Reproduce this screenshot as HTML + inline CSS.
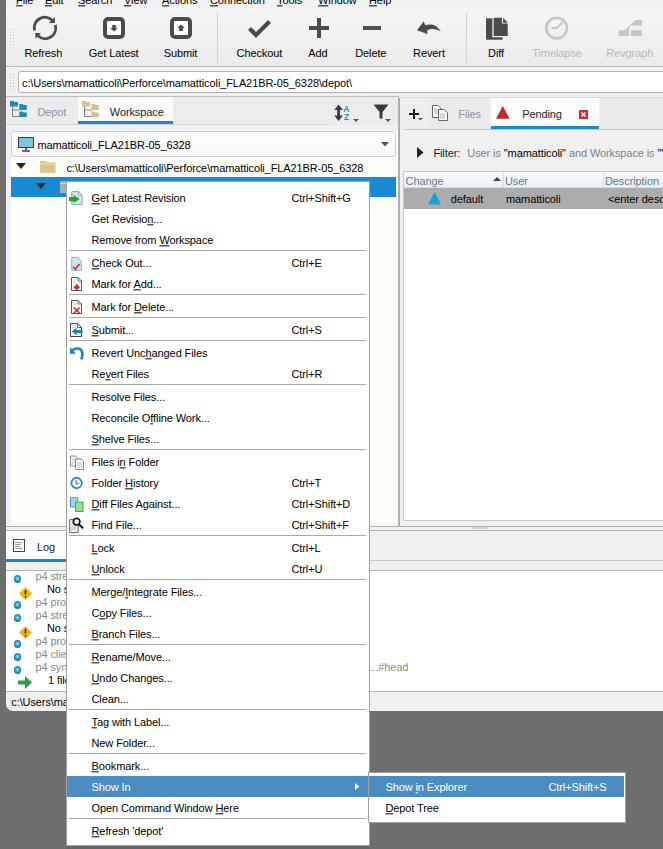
<!DOCTYPE html><html><head><meta charset="utf-8"><style>
*{margin:0;padding:0;box-sizing:border-box}
html,body{width:663px;height:849px;overflow:hidden;background:#6e6e6e;font-family:"Liberation Sans",sans-serif;font-size:11px;color:#000}
.a{position:absolute}
.t{position:absolute;white-space:nowrap;height:0;line-height:0;letter-spacing:-0.1px}
.bl{position:absolute;left:0;bottom:0;line-height:normal;display:block;transform:translateY(0.212em)}
u{text-decoration:underline;text-underline-offset:1px;text-decoration-thickness:1px}
svg{position:absolute;overflow:visible}
</style></head><body>
<div class="a" style="left:6px;top:0;width:657px;height:711px;background:#f0f0f0;border-bottom-left-radius:7px"></div>
<div class="a" style="left:6px;top:0;width:657px;height:8px;background:#f2f2f2"></div>
<div class="t" style="left:16px;top:3.6px;color:#000;font-size:11px;"><span class="bl"><u>F</u>ile</span></div>
<div class="t" style="left:45px;top:3.6px;color:#000;font-size:11px;"><span class="bl"><u>E</u>dit</span></div>
<div class="t" style="left:78px;top:3.6px;color:#000;font-size:11px;"><span class="bl"><u>S</u>earch</span></div>
<div class="t" style="left:124px;top:3.6px;color:#000;font-size:11px;"><span class="bl"><u>V</u>iew</span></div>
<div class="t" style="left:162px;top:3.6px;color:#000;font-size:11px;"><span class="bl"><u>A</u>ctions</span></div>
<div class="t" style="left:210px;top:3.6px;color:#000;font-size:11px;"><span class="bl"><u>C</u>onnection</span></div>
<div class="t" style="left:277px;top:3.6px;color:#000;font-size:11px;"><span class="bl"><u>T</u>ools</span></div>
<div class="t" style="left:318px;top:3.6px;color:#000;font-size:11px;"><span class="bl"><u>W</u>indow</span></div>
<div class="t" style="left:369px;top:3.6px;color:#000;font-size:11px;"><span class="bl"><u>H</u>elp</span></div>
<div class="a" style="left:6px;top:8px;width:657px;height:58px;background:linear-gradient(#f6f6f6,#ebebeb)"></div>
<div class="a" style="left:6px;top:66px;width:657px;height:1px;background:#b9b9b9"></div>
<div class="a" style="left:10px;top:29px;width:1px;height:1px;background:#bdbdbd"></div>
<div class="a" style="left:13px;top:29px;width:1px;height:1px;background:#bdbdbd"></div>
<div class="a" style="left:10px;top:32px;width:1px;height:1px;background:#bdbdbd"></div>
<div class="a" style="left:13px;top:32px;width:1px;height:1px;background:#bdbdbd"></div>
<div class="a" style="left:10px;top:35px;width:1px;height:1px;background:#bdbdbd"></div>
<div class="a" style="left:13px;top:35px;width:1px;height:1px;background:#bdbdbd"></div>
<div class="a" style="left:10px;top:38px;width:1px;height:1px;background:#bdbdbd"></div>
<div class="a" style="left:13px;top:38px;width:1px;height:1px;background:#bdbdbd"></div>
<div class="a" style="left:10px;top:41px;width:1px;height:1px;background:#bdbdbd"></div>
<div class="a" style="left:13px;top:41px;width:1px;height:1px;background:#bdbdbd"></div>
<div class="a" style="left:10px;top:44px;width:1px;height:1px;background:#bdbdbd"></div>
<div class="a" style="left:13px;top:44px;width:1px;height:1px;background:#bdbdbd"></div>
<div class="a" style="left:217px;top:12px;width:1px;height:52px;background:#d2d2d2"></div>
<div class="a" style="left:466px;top:12px;width:1px;height:52px;background:#d2d2d2"></div>
<div class="t" style="left:3.3999999999999986px;width:80px;top:57px;color:#000"><span class="bl" style="width:80px;text-align:center">Refresh</span></div>
<div class="t" style="left:73.7px;width:80px;top:57px;color:#000"><span class="bl" style="width:80px;text-align:center">Get Latest</span></div>
<div class="t" style="left:140.5px;width:80px;top:57px;color:#000"><span class="bl" style="width:80px;text-align:center">Submit</span></div>
<div class="t" style="left:219.39999999999998px;width:80px;top:57px;color:#000"><span class="bl" style="width:80px;text-align:center">Checkout</span></div>
<div class="t" style="left:278px;width:80px;top:57px;color:#000"><span class="bl" style="width:80px;text-align:center">Add</span></div>
<div class="t" style="left:330.8px;width:80px;top:57px;color:#000"><span class="bl" style="width:80px;text-align:center">Delete</span></div>
<div class="t" style="left:389px;width:80px;top:57px;color:#000"><span class="bl" style="width:80px;text-align:center">Revert</span></div>
<div class="t" style="left:456px;width:80px;top:57px;color:#000"><span class="bl" style="width:80px;text-align:center">Diff</span></div>
<div class="t" style="left:517px;width:80px;top:57px;color:#b8b8b8"><span class="bl" style="width:80px;text-align:center">Timelapse</span></div>
<div class="t" style="left:589.8px;width:80px;top:57px;color:#b8b8b8"><span class="bl" style="width:80px;text-align:center">Revgraph</span></div>
<svg style="left:33px;top:16px" width="25" height="24" viewBox="0 0 25 24">
<path d="M1.6 14.5 A10.6 10.6 0 0 1 19.4 4.4" fill="none" stroke="#4b4b4b" stroke-width="2.9"/>
<path d="M22.3 9 A10.6 10.6 0 0 1 4.9 19.8" fill="none" stroke="#4b4b4b" stroke-width="2.9"/>
<path d="M21.9 0.9 L21.9 6.9 L15.9 6.9 Z" fill="#4b4b4b"/>
<path d="M2.2 17 L7.9 17 L2.6 22.8 Z" fill="#4b4b4b"/>
</svg>
<svg style="left:103px;top:17px" width="22" height="22" viewBox="0 0 22 22">
<rect x="2" y="2" width="18" height="18" rx="3" fill="#fff" stroke="#4b4b4b" stroke-width="4"/>
<path d="M8 6 h6 v5 h3.5 L11 17 L4.5 11 H8 Z" fill="#4b4b4b" transform="translate(11 11) scale(0.6) translate(-11 -11)"/>
</svg>
<svg style="left:170px;top:17px" width="22" height="22" viewBox="0 0 22 22">
<rect x="2" y="2" width="18" height="18" rx="3" fill="#fff" stroke="#4b4b4b" stroke-width="4"/>
<path d="M8 16 h6 v-5 h3.5 L11 5 L4.5 11 H8 Z" fill="#4b4b4b" transform="translate(11 11) scale(0.6) translate(-11 -11)"/>
</svg>
<svg style="left:248px;top:19px" width="23" height="19" viewBox="0 0 23 19"><path d="M1.5 9.5 L8 16 L21.5 2.5" fill="none" stroke="#4b4b4b" stroke-width="4.2"/></svg>
<div class="a" style="left:309px;top:26px;width:20px;height:4px;background:#4b4b4b"></div>
<div class="a" style="left:317px;top:18px;width:4px;height:20px;background:#4b4b4b"></div>
<div class="a" style="left:362.5px;top:26px;width:18px;height:4px;background:#505050"></div>
<svg style="left:417px;top:21px" width="25" height="14" viewBox="0 0 25 14"><path d="M0 9.3 L6.6 0.5 L8.4 4.2 C12 2.8 19.5 2.2 23.8 10.8 C19 7.2 14 7.4 10.2 9.3 L10.5 12.9 Z" fill="#4b4b4b"/></svg>
<svg style="left:485px;top:16px" width="25" height="24" viewBox="0 0 25 24">
<rect x="1" y="2.3" width="16.6" height="21.4" fill="#4b4b4b"/>
<path d="M8 1.1 H17.2 L23.4 7.3 V20.7 H8 Z" fill="#4b4b4b" stroke="#f2f2f2" stroke-width="1.3"/>
<path d="M17.5 0.5 V7 H24" fill="none" stroke="#f2f2f2" stroke-width="1.1"/>
<path d="M18.2 2.1 V6.4 H22.6 Z" fill="#4b4b4b"/>
</svg>
<svg style="left:544px;top:16px" width="26" height="25" viewBox="0 0 26 25">
<circle cx="12.6" cy="12.1" r="10.3" fill="none" stroke="#c6c6c6" stroke-width="2.6"/>
<path d="M18.4 6.8 L12.6 12.1 H7.3" fill="none" stroke="#c6c6c6" stroke-width="2"/>
</svg>
<svg style="left:618px;top:20px" width="26" height="17" viewBox="0 0 26 17">
<path d="M6.6 10.3 L17.9 0 H24 V5.6 H12.4 L11.1 10.3 Z" fill="#c6c6c6"/>
<path d="M3 10.3 H11.1 V16 H3 A2.85 2.85 0 0 1 3 10.3 Z" fill="#c6c6c6"/>
<rect x="12.9" y="10.3" width="11.1" height="5.7" fill="#c6c6c6"/>
</svg>
<div class="a" style="left:10px;top:74px;width:1px;height:1px;background:#bdbdbd"></div>
<div class="a" style="left:13px;top:74px;width:1px;height:1px;background:#bdbdbd"></div>
<div class="a" style="left:10px;top:77px;width:1px;height:1px;background:#bdbdbd"></div>
<div class="a" style="left:13px;top:77px;width:1px;height:1px;background:#bdbdbd"></div>
<div class="a" style="left:10px;top:80px;width:1px;height:1px;background:#bdbdbd"></div>
<div class="a" style="left:13px;top:80px;width:1px;height:1px;background:#bdbdbd"></div>
<div class="a" style="left:10px;top:83px;width:1px;height:1px;background:#bdbdbd"></div>
<div class="a" style="left:13px;top:83px;width:1px;height:1px;background:#bdbdbd"></div>
<div class="a" style="left:10px;top:86px;width:1px;height:1px;background:#bdbdbd"></div>
<div class="a" style="left:13px;top:86px;width:1px;height:1px;background:#bdbdbd"></div>
<div class="a" style="left:10px;top:89px;width:1px;height:1px;background:#bdbdbd"></div>
<div class="a" style="left:13px;top:89px;width:1px;height:1px;background:#bdbdbd"></div>
<div class="a" style="left:18px;top:71px;width:660px;height:22px;background:#fff;border:1px solid #adadad;border-radius:3px"></div>
<div class="t" style="left:22px;top:86.5px;color:#000;font-size:11px;"><span class="bl">c:\Users\mamatticoli\Perforce\mamatticoli_FLA21BR-05_6328\depot\</span></div>
<div class="a" style="left:6px;top:96px;width:657px;height:1px;background:#bcbcbc"></div>
<div class="a" style="left:6px;top:97px;width:392px;height:28px;background:#ececec"></div>
<div class="a" style="left:78px;top:97px;width:95px;height:27px;background:#fbfbfb"></div>
<div class="a" style="left:78px;top:121px;width:95px;height:3px;background:#1a87d0"></div>
<div class="a" style="left:6px;top:124px;width:323px;height:1px;background:#d4d4d4"></div>
<svg style="left:10px;top:101px" width="18" height="17" viewBox="0 0 18 17">
<path d="M2.5 5 V15.5 H9.5 M2.5 9 H9.5" fill="none" stroke="#808080" stroke-width="1"/>
<path d="M0 0 H3.5 L4.3 1 H8 V5.5 H0 Z" fill="#1f8ab5"/>
<path d="M9.3 3 H12.8 L13.6 4 H16.8 V9 H9.3 Z" fill="#1f8ab5"/>
<path d="M9.3 10.5 H12.8 L13.6 11.5 H16.8 V16 H9.3 Z" fill="#1f8ab5"/>
</svg>
<div class="t" style="left:37.4px;top:115.5px;color:#8c94a0;font-size:11px;"><span class="bl">Depot</span></div>
<svg style="left:82px;top:101px" width="18" height="17" viewBox="0 0 18 17">
<path d="M2.5 5 V15.5 H9.5 M2.5 9 H9.5" fill="none" stroke="#808080" stroke-width="1"/>
<path d="M0 0 H3.5 L4.3 1 H8 V5.5 H0 Z" fill="#d8c08c"/>
<path d="M9.3 3 H12.8 L13.6 4 H16.8 V9 H9.3 Z" fill="#d8c08c"/>
<path d="M9.3 10.5 H12.8 L13.6 11.5 H16.8 V16 H9.3 Z" fill="#d8c08c"/>
</svg>
<div class="t" style="left:109.8px;top:115.5px;color:#1e1e28;font-size:11px;"><span class="bl">Workspace</span></div>
<svg style="left:334px;top:104px" width="26" height="19" viewBox="0 0 26 19">
<path d="M4.6 3 V14" stroke="#3a3a3a" stroke-width="2.8"/>
<path d="M0.2 6 L4.6 0.5 L9 6 Z M0.2 11.5 L4.6 17 L9 11.5 Z" fill="#3a3a3a"/>
<text x="9.6" y="7.8" font-size="8.2" font-weight="bold" fill="#1a8dbd" font-family="Liberation Sans">A</text>
<text x="9.9" y="16" font-size="8.2" font-weight="bold" fill="#1a8dbd" font-family="Liberation Sans">Z</text>
<path d="M19 15 H25 L22 18 Z" fill="#555"/>
</svg>
<svg style="left:373px;top:104px" width="19" height="19" viewBox="0 0 19 19">
<path d="M0.5 0.5 H15.5 L9.5 8 V14.5 H6.5 V8 Z" fill="#3a3a3a"/>
<path d="M12 15 H18 L15 18 Z" fill="#555"/>
</svg>
<div class="a" style="left:398px;top:96px;width:1px;height:431px;background:#b4b4b4"></div>
<div class="a" style="left:6px;top:125px;width:392px;height:401px;background:#fdfdf8"></div>
<div class="a" style="left:6px;top:125px;width:5px;height:401px;background:#eef2f8"></div>
<div class="a" style="left:6px;top:125px;width:392px;height:6px;background:#eef2f8"></div>
<div class="a" style="left:11px;top:131px;width:385px;height:26px;background:linear-gradient(#fefefe,#f7f7f7);border:1px solid #cfcfcf;border-radius:3px"></div>
<svg style="left:18px;top:137px" width="17" height="15" viewBox="0 0 17 15">
<rect x="0.5" y="0.5" width="15" height="10" fill="#7ec3e0" stroke="#3c3c3c" stroke-width="1"/>
<path d="M8 11 V13 M4 14 H12" stroke="#3c3c3c" stroke-width="1.6"/>
</svg>
<div class="t" style="left:37.4px;top:148.5px;color:#000;font-size:11px;"><span class="bl">mamatticoli_FLA21BR-05_6328</span></div>
<svg style="left:381px;top:142px" width="8" height="5"><path d="M0 0 H8 L4 4.5 Z" fill="#555"/></svg>
<svg style="left:16px;top:163px" width="10" height="6"><path d="M0 0 H10 L5 6 Z" fill="#222"/></svg>
<svg style="left:40px;top:161px" width="16" height="12" viewBox="0 0 16 12">
<path d="M0 0 H6 L7 1.5 H15.5 V12 H0 Z" fill="#dcc48f"/>
<path d="M0 3 H15.5" stroke="#efe3c6" stroke-width="0.8"/>
</svg>
<div class="t" style="left:66.4px;top:172px;color:#000;font-size:11px;"><span class="bl">c:\Users\mamatticoli\Perforce\mamatticoli_FLA21BR-05_6328</span></div>
<div class="a" style="left:11px;top:177px;width:385px;height:20px;background:#168ad2"></div>
<svg style="left:36px;top:183px" width="10" height="6"><path d="M0 0 H10 L5 6 Z" fill="#2a2a2a"/></svg>
<div class="a" style="left:60px;top:181px;width:8px;height:12px;background:#a3b1b6"></div>
<div class="a" style="left:60px;top:183px;width:8px;height:1px;background:#c4dbe6"></div>
<div class="a" style="left:6px;top:526px;width:657px;height:1px;background:#b0b0b0"></div>
<div class="a" style="left:6px;top:527px;width:657px;height:3px;background:#f0f0f0"></div>
<div class="a" style="left:6px;top:530px;width:657px;height:1px;background:#b0b0b0"></div>
<div class="a" style="left:399px;top:96px;width:264px;height:430px;background:#f0f0f0"></div>
<div class="a" style="left:399px;top:98px;width:1px;height:428px;background:#a9a9a9"></div>
<div class="a" style="left:400px;top:98px;width:27px;height:31px;background:#eeeeee"></div>
<div class="a" style="left:427px;top:98px;width:64px;height:31px;background:#ebebeb"></div>
<div class="a" style="left:600px;top:98px;width:63px;height:31px;background:#ebebeb"></div>
<div class="a" style="left:491px;top:98px;width:108px;height:31px;background:#fcfcfc"></div>
<div class="a" style="left:491px;top:126px;width:108px;height:3px;background:#1a87d0"></div>
<div class="a" style="left:403px;top:129px;width:260px;height:1px;background:#c4c4c4"></div>
<div class="a" style="left:400px;top:97px;width:263px;height:1px;background:#d8d8d8"></div>
<div class="a" style="left:409px;top:113px;width:10px;height:2px;background:#1a1a1a"></div>
<div class="a" style="left:413px;top:109px;width:2px;height:10px;background:#1a1a1a"></div>
<svg style="left:418px;top:118px" width="5" height="3"><path d="M0 0 H5 L2.5 2.5 Z" fill="#555"/></svg>
<svg style="left:432px;top:105px" width="16" height="16" viewBox="0 0 16 16">
<path d="M0.5 0.5 H6 L8.5 3 V12.5 H0.5 Z" fill="#fff" stroke="#666" stroke-width="1"/>
<path d="M6.5 4.5 H12 L15.5 8 V15.5 H6.5 Z" fill="#fff" stroke="#666" stroke-width="1"/>
<path d="M2 4 H6 M2 6 H6 M2 8 H6 M8 9 H13 M8 11 H13 M8 13 H13" stroke="#999" stroke-width="0.8"/>
</svg>
<div class="t" style="left:458.3px;top:117.5px;color:#8c94a0;font-size:11px;"><span class="bl">Files</span></div>
<svg style="left:496px;top:106px" width="14" height="13"><path d="M6.8 0 L13.5 12.8 H0 Z" fill="#c8262b"/></svg>
<div class="t" style="left:522.2px;top:117.9px;color:#1e1e28;font-size:11px;"><span class="bl">Pending</span></div>
<div class="a" style="left:579px;top:110px;width:9px;height:9px;background:#c62f33"></div>
<svg style="left:579px;top:110px" width="9" height="9"><path d="M2.5 2.5 L6.5 6.5 M6.5 2.5 L2.5 6.5" stroke="#fff" stroke-width="1.5"/></svg>
<svg style="left:417px;top:147px" width="7" height="11"><path d="M0 0 L6.5 5.5 L0 11 Z" fill="#222"/></svg>
<div class="t" style="left:433.4px;top:157px;color:#101828;font-size:11px;"><span class="bl">Filter:</span></div>
<div class="t" style="left:467.3px;top:157px;color:#7c8088;font-size:11px;"><span class="bl">User is <span style="color:#000">"mamatticoli"</span> and Workspace is <span style="color:#000">""</span></span></div>
<div class="a" style="left:403px;top:171px;width:260px;height:350px;background:#fff;border-left:1px solid #c8c8c8;border-top:1px solid #c8c8c8;border-bottom:1px solid #c8c8c8"></div>
<div class="a" style="left:404px;top:172px;width:259px;height:16px;background:linear-gradient(#fbfcfe,#e6eef7)"></div>
<div class="a" style="left:404px;top:187px;width:259px;height:1px;background:#d5dde6"></div>
<div class="a" style="left:503px;top:172px;width:1px;height:16px;background:#d5dde6"></div>
<div class="a" style="left:603px;top:172px;width:1px;height:16px;background:#d5dde6"></div>
<div class="t" style="left:405.6px;top:184.7px;color:#6a7888;font-size:11px;"><span class="bl">Change</span></div>
<div class="t" style="left:505px;top:184.7px;color:#6a7888;font-size:11px;"><span class="bl">User</span></div>
<div class="t" style="left:605px;top:184.7px;color:#6a7888;font-size:11px;"><span class="bl">Description</span></div>
<svg style="left:493px;top:177px" width="8" height="4"><path d="M0 4 L4 0 L8 4 Z" fill="#444"/></svg>
<div class="a" style="left:404px;top:188px;width:259px;height:21px;background:#acacac"></div>
<svg style="left:428px;top:192px" width="13" height="13"><path d="M6.5 0 L13 12.6 H0 Z" fill="#1a9fe0"/></svg>
<div class="t" style="left:450.8px;top:203.3px;color:#000;font-size:11px;"><span class="bl">default</span></div>
<div class="t" style="left:506px;top:203.3px;color:#000;font-size:11px;"><span class="bl">mamatticoli</span></div>
<div class="t" style="left:608px;top:203.3px;color:#000;font-size:11px;"><span class="bl">&lt;enter description here&gt;</span></div>
<div class="a" style="left:473px;top:527px;width:14px;height:2px;background-image:radial-gradient(circle,#aaa 0.6px,transparent 0.8px);background-size:2px 2px"></div>
<div class="a" style="left:6px;top:531px;width:657px;height:29px;background:#efefef"></div>
<div class="a" style="left:6px;top:531px;width:61px;height:28px;background:#fbfbfb"></div>
<div class="a" style="left:6px;top:559px;width:64px;height:3px;background:#1a87d0"></div>
<div class="a" style="left:6px;top:560px;width:657px;height:1px;background:#c8c8c8"></div>
<div class="a" style="left:6px;top:559px;width:64px;height:3px;background:#1a87d0"></div>
<div class="a" style="left:6px;top:562px;width:657px;height:8px;background:#efefef"></div>
<div class="a" style="left:6px;top:570px;width:657px;height:1px;background:#b4b4b4"></div>
<div class="a" style="left:6px;top:571px;width:657px;height:120px;background:#fff"></div>
<div class="a" style="left:6px;top:691px;width:657px;height:1px;background:#b4b4b4"></div>
<svg style="left:13px;top:539px" width="12" height="13" viewBox="0 0 12 13">
<rect x="0.5" y="0.5" width="11" height="12" fill="#fff" stroke="#444" stroke-width="1"/>
<path d="M2 3.5 H9 M2 5.5 H8 M2 7.5 H7 M2 9.5 H9" stroke="#9a9a9a" stroke-width="1"/>
</svg>
<div class="t" style="left:37px;top:550.7px;color:#1e1e28;font-size:11px;"><span class="bl">Log</span></div>
<div class="a" style="left:13.5px;top:575.4px;width:7.5px;height:7.5px;border-radius:50%;background:radial-gradient(circle at 50% 45%,#b8e2f0 0,#5ab4d6 25%,#1787b2 55%,#137ba3 100%)"></div>
<div class="t" style="left:35.4px;top:580px;color:#8a8a8a;font-size:11px;"><span class="bl">p4 streams -F "Stream=//..."</span></div>
<svg style="left:19px;top:587.3px" width="13" height="13" viewBox="0 0 13 13"><path d="M6.5 0 L13 6.5 L6.5 13 L0 6.5 Z" fill="#f5b800"/><path d="M6.5 3 V7.5 M6.5 9 V10.5" stroke="#222" stroke-width="1.6"/></svg>
<div class="t" style="left:47px;top:593px;color:#000;font-size:11px;"><span class="bl">No such file(s).</span></div>
<div class="a" style="left:13.5px;top:601.4px;width:7.5px;height:7.5px;border-radius:50%;background:radial-gradient(circle at 50% 45%,#b8e2f0 0,#5ab4d6 25%,#1787b2 55%,#137ba3 100%)"></div>
<div class="t" style="left:35.4px;top:606px;color:#8a8a8a;font-size:11px;"><span class="bl">p4 property -l -n P4.Swarm.URL</span></div>
<div class="a" style="left:13.5px;top:614.4px;width:7.5px;height:7.5px;border-radius:50%;background:radial-gradient(circle at 50% 45%,#b8e2f0 0,#5ab4d6 25%,#1787b2 55%,#137ba3 100%)"></div>
<div class="t" style="left:35.4px;top:619px;color:#8a8a8a;font-size:11px;"><span class="bl">p4 streams -F "Stream=//..."</span></div>
<svg style="left:19px;top:626.3px" width="13" height="13" viewBox="0 0 13 13"><path d="M6.5 0 L13 6.5 L6.5 13 L0 6.5 Z" fill="#f5b800"/><path d="M6.5 3 V7.5 M6.5 9 V10.5" stroke="#222" stroke-width="1.6"/></svg>
<div class="t" style="left:47px;top:632px;color:#000;font-size:11px;"><span class="bl">No such file(s).</span></div>
<div class="a" style="left:13.5px;top:640.4px;width:7.5px;height:7.5px;border-radius:50%;background:radial-gradient(circle at 50% 45%,#b8e2f0 0,#5ab4d6 25%,#1787b2 55%,#137ba3 100%)"></div>
<div class="t" style="left:35.4px;top:645px;color:#8a8a8a;font-size:11px;"><span class="bl">p4 property -l -n P4.Swarm.URL</span></div>
<div class="a" style="left:13.5px;top:653.4px;width:7.5px;height:7.5px;border-radius:50%;background:radial-gradient(circle at 50% 45%,#b8e2f0 0,#5ab4d6 25%,#1787b2 55%,#137ba3 100%)"></div>
<div class="t" style="left:35.4px;top:658px;color:#8a8a8a;font-size:11px;"><span class="bl">p4 client -o mamatticoli_FLA21BR</span></div>
<div class="a" style="left:13.5px;top:666.4px;width:7.5px;height:7.5px;border-radius:50%;background:radial-gradient(circle at 50% 45%,#b8e2f0 0,#5ab4d6 25%,#1787b2 55%,#137ba3 100%)"></div>
<div class="t" style="left:35.4px;top:671px;color:#8a8a8a;font-size:11px;"><span class="bl">p4 sync c:\Users\mamatticoli\Perforce\mamatticoli_FLA21BR-05_632\...#head</span></div>
<svg style="left:18px;top:676px" width="14" height="13" viewBox="0 0 14 13"><path d="M0 4.5 H7 V0 L14 6.5 L7 13 V8.5 H0 Z" fill="#2ea043"/></svg>
<div class="t" style="left:48px;top:684px;color:#000;font-size:11px;"><span class="bl">1 file(s) updated</span></div>
<div class="t" style="left:11.3px;top:706.4px;color:#000;font-size:11px;"><span class="bl">c:\Users\mamatticoli\Perforce\mamatticoli_FLA21BR-05_6328\depot\</span></div>
<div class="a" style="left:66px;top:181px;width:304px;height:665px;background:#fff;border:1px solid #a0a0a0"></div>
<div class="a" style="left:66px;top:846px;width:304px;height:3px;background:#646464"></div>
<div class="t" style="left:91.5px;top:202px;color:#000;font-size:11px;"><span class="bl"><u>G</u>et Latest Revision</span></div>
<div class="t" style="left:291.5px;top:202px;color:#000;font-size:11px;"><span class="bl">Ctrl+Shift+G</span></div>
<svg style="left:68px;top:188px" width="17" height="19" viewBox="0 0 17 19"><path d="M3.8 3.5 H10.5 L14 7 V16.5 H3.8 Z" fill="#cfe4ef" stroke="#86aec4" stroke-width="1"/><path d="M10.5 3.5 V7 H14" fill="none" stroke="#86aec4" stroke-width="0.8"/><path d="M1 9.1 H5.7 V7 L11.5 11 L5.7 14.9 V13.3 H1 Z" fill="#2e9e2e"/></svg>
<div class="t" style="left:91.5px;top:223px;color:#000;font-size:11px;"><span class="bl">Get Revisio<u>n</u>...</span></div>
<div class="t" style="left:91.5px;top:244px;color:#000;font-size:11px;"><span class="bl">Remove from <u>W</u>orkspace</span></div>
<div class="a" style="left:69px;top:250px;width:297px;height:1px;background:#a8a8a8"></div>
<div class="t" style="left:91.5px;top:267px;color:#000;font-size:11px;"><span class="bl"><u>C</u>heck Out...</span></div>
<div class="t" style="left:291.5px;top:267px;color:#000;font-size:11px;"><span class="bl">Ctrl+E</span></div>
<svg style="left:68px;top:253px" width="17" height="19" viewBox="0 0 17 19"><path d="M3.7 4.5 H10 L13.4 8 V17.3 H3.7 Z" fill="#d2e7f1" stroke="#8fb5c9" stroke-width="1"/><path d="M5 13.5 L7.3 16.2 L11.6 11" fill="none" stroke="#cf3434" stroke-width="1.7"/></svg>
<div class="t" style="left:91.5px;top:288px;color:#000;font-size:11px;"><span class="bl">Mark for <u>A</u>dd...</span></div>
<svg style="left:68px;top:274px" width="17" height="19" viewBox="0 0 17 19"><path d="M3.5 3.5 H10 L13.5 7 V16.5 H3.5 Z" fill="#fbfbfb" stroke="#555" stroke-width="1"/><path d="M10 3.5 V7 H13.5" fill="none" stroke="#555" stroke-width="0.8"/><path d="M8.7 10.3 V16.2 M5.8 13.3 H11.6" stroke="#cc2424" stroke-width="2.2"/><path d="M5 6 H8 M5 8 H8" stroke="#bbb" stroke-width="0.7"/></svg>
<div class="a" style="left:69px;top:294px;width:297px;height:1px;background:#a8a8a8"></div>
<div class="t" style="left:91.5px;top:311px;color:#000;font-size:11px;"><span class="bl">Mark for <u>D</u>elete...</span></div>
<svg style="left:68px;top:297px" width="17" height="19" viewBox="0 0 17 19"><path d="M3.5 3.5 H10 L13.5 7 V16.5 H3.5 Z" fill="#fbfbfb" stroke="#555" stroke-width="1"/><path d="M10 3.5 V7 H13.5" fill="none" stroke="#555" stroke-width="0.8"/><path d="M5.8 10.5 L11.6 16.2 M11.6 10.5 L5.8 16.2" stroke="#cc2b2b" stroke-width="1.6"/><path d="M5 6 H8 M5 8 H8" stroke="#bbb" stroke-width="0.7"/></svg>
<div class="a" style="left:69px;top:317px;width:297px;height:1px;background:#a8a8a8"></div>
<div class="t" style="left:91.5px;top:334px;color:#000;font-size:11px;"><span class="bl"><u>S</u>ubmit...</span></div>
<div class="t" style="left:291.5px;top:334px;color:#000;font-size:11px;"><span class="bl">Ctrl+S</span></div>
<svg style="left:68px;top:320px" width="17" height="19" viewBox="0 0 17 19"><path d="M2.5 3.5 H9.5 L13.5 7.5 V16.5 H2.5 Z" fill="#fbfbfb" stroke="#444" stroke-width="1"/><path d="M9.5 3.5 V7.5 H13.5" fill="none" stroke="#444" stroke-width="0.8"/><path d="M4 5.5 H8 M4 7.5 H8" stroke="#bbb" stroke-width="0.7"/><path d="M3.8 11.5 L8.5 7.8 V10 H14.5 V13.3 H8.5 V15.3 Z" fill="#0f84b8"/></svg>
<div class="a" style="left:69px;top:340px;width:297px;height:1px;background:#a8a8a8"></div>
<div class="t" style="left:91.5px;top:357px;color:#000;font-size:11px;"><span class="bl">Revert Unc<u>h</u>anged Files</span></div>
<svg style="left:68px;top:343px" width="17" height="19" viewBox="0 0 17 19"><path d="M4 8.2 C6.5 4.5 14 4 14.3 10.5 C14.4 12.8 14 14.5 13.5 16.5" fill="none" stroke="#1b88b2" stroke-width="2.7"/><path d="M2 3.9 V10.8 H8 Z" fill="#1b88b2"/></svg>
<div class="t" style="left:91.5px;top:378px;color:#000;font-size:11px;"><span class="bl">Re<u>v</u>ert Files</span></div>
<div class="t" style="left:291.5px;top:378px;color:#000;font-size:11px;"><span class="bl">Ctrl+R</span></div>
<div class="a" style="left:69px;top:384px;width:297px;height:1px;background:#a8a8a8"></div>
<div class="t" style="left:91.5px;top:401px;color:#000;font-size:11px;"><span class="bl">Resolve Files...</span></div>
<div class="t" style="left:91.5px;top:422px;color:#000;font-size:11px;"><span class="bl">Reconcile O<u>f</u>fline Work...</span></div>
<div class="t" style="left:91.5px;top:443px;color:#000;font-size:11px;"><span class="bl"><u>S</u>helve Files...</span></div>
<div class="a" style="left:69px;top:449px;width:297px;height:1px;background:#a8a8a8"></div>
<div class="t" style="left:91.5px;top:466px;color:#000;font-size:11px;"><span class="bl">Files i<u>n</u> Folder</span></div>
<svg style="left:68px;top:452px" width="17" height="19" viewBox="0 0 17 19"><path d="M2.5 4 H7.5 L9.7 6.2 V14 H2.5 Z" fill="#fafafa" stroke="#8a8a8a" stroke-width="1"/><path d="M7.5 7 H13 L15.5 9.5 V17.5 H7.5 Z" fill="#fafafa" stroke="#8a8a8a" stroke-width="1"/><path d="M4 7 H7 M4 9 H7 M4 11 H6.5 M9 11 H14 M9 13 H14 M9 15 H14" stroke="#b5b5b5" stroke-width="0.8"/></svg>
<div class="t" style="left:91.5px;top:487px;color:#000;font-size:11px;"><span class="bl">Folder <u>H</u>istory</span></div>
<div class="t" style="left:291.5px;top:487px;color:#000;font-size:11px;"><span class="bl">Ctrl+T</span></div>
<svg style="left:68px;top:473px" width="17" height="19" viewBox="0 0 17 19"><circle cx="8.6" cy="10" r="5.2" fill="#fff" stroke="#2391c2" stroke-width="1.9"/><path d="M8.1 6.8 V10.8 H11.3" fill="none" stroke="#666" stroke-width="1.1"/></svg>
<div class="t" style="left:91.5px;top:508px;color:#000;font-size:11px;"><span class="bl"><u>D</u>iff Files Against...</span></div>
<div class="t" style="left:291.5px;top:508px;color:#000;font-size:11px;"><span class="bl">Ctrl+Shift+D</span></div>
<svg style="left:68px;top:494px" width="17" height="19" viewBox="0 0 17 19"><rect x="2.5" y="3.7" width="7.2" height="9.2" fill="#a6d2ea" stroke="#3e9fd0" stroke-width="1"/><rect x="7.5" y="8" width="7.5" height="9.5" fill="#a2d890" stroke="#44ac34" stroke-width="1"/></svg>
<div class="t" style="left:91.5px;top:529px;color:#000;font-size:11px;"><span class="bl">Find File...</span></div>
<div class="t" style="left:291.5px;top:529px;color:#000;font-size:11px;"><span class="bl">Ctrl+Shift+F</span></div>
<svg style="left:68px;top:515px" width="17" height="19" viewBox="0 0 17 19"><path d="M1.7 4.5 H7 L10.2 7.7 V17.5 H1.7 Z" fill="#efefef" stroke="#6a6a6a" stroke-width="1"/><path d="M3 12 H8 M3 14 H8" stroke="#aaa" stroke-width="0.8"/><circle cx="8.6" cy="6.7" r="3.3" fill="#fff" stroke="#111" stroke-width="1.7"/><path d="M10.8 9.2 L15.2 13.4" stroke="#111" stroke-width="2"/></svg>
<div class="a" style="left:69px;top:535px;width:297px;height:1px;background:#a8a8a8"></div>
<div class="t" style="left:91.5px;top:552px;color:#000;font-size:11px;"><span class="bl"><u>L</u>ock</span></div>
<div class="t" style="left:291.5px;top:552px;color:#000;font-size:11px;"><span class="bl">Ctrl+L</span></div>
<div class="t" style="left:91.5px;top:573px;color:#000;font-size:11px;"><span class="bl"><u>U</u>nlock</span></div>
<div class="t" style="left:291.5px;top:573px;color:#000;font-size:11px;"><span class="bl">Ctrl+U</span></div>
<div class="a" style="left:69px;top:579px;width:297px;height:1px;background:#a8a8a8"></div>
<div class="t" style="left:91.5px;top:596px;color:#000;font-size:11px;"><span class="bl">Merge/<u>I</u>ntegrate Files...</span></div>
<div class="t" style="left:91.5px;top:617px;color:#000;font-size:11px;"><span class="bl">C<u>o</u>py Files...</span></div>
<div class="t" style="left:91.5px;top:638px;color:#000;font-size:11px;"><span class="bl"><u>B</u>ranch Files...</span></div>
<div class="a" style="left:69px;top:644px;width:297px;height:1px;background:#a8a8a8"></div>
<div class="t" style="left:91.5px;top:661px;color:#000;font-size:11px;"><span class="bl"><u>R</u>ename/Move...</span></div>
<div class="t" style="left:91.5px;top:682px;color:#000;font-size:11px;"><span class="bl"><u>U</u>ndo Changes...</span></div>
<div class="t" style="left:91.5px;top:703px;color:#000;font-size:11px;"><span class="bl">Clean...</span></div>
<div class="a" style="left:69px;top:709px;width:297px;height:1px;background:#a8a8a8"></div>
<div class="t" style="left:91.5px;top:726px;color:#000;font-size:11px;"><span class="bl"><u>T</u>ag with Label...</span></div>
<div class="t" style="left:91.5px;top:747px;color:#000;font-size:11px;"><span class="bl">New Folder...</span></div>
<div class="a" style="left:69px;top:753px;width:297px;height:1px;background:#a8a8a8"></div>
<div class="t" style="left:91.5px;top:770px;color:#000;font-size:11px;"><span class="bl"><u>B</u>ookmark...</span></div>
<div class="a" style="left:67px;top:776px;width:302px;height:21px;background:#4b8dc0"></div>
<svg style="left:355px;top:783px" width="5" height="7"><path d="M0 0 L4.5 3.5 L0 7 Z" fill="#fff"/></svg>
<div class="t" style="left:91.5px;top:791px;color:#fff;font-size:11px;"><span class="bl">Show In</span></div>
<div class="t" style="left:91.5px;top:812px;color:#000;font-size:11px;"><span class="bl">Open Command Window <u>H</u>ere</span></div>
<div class="a" style="left:69px;top:818px;width:297px;height:1px;background:#a8a8a8"></div>
<div class="t" style="left:91.5px;top:835px;color:#000;font-size:11px;"><span class="bl"><u>R</u>efresh 'depot'</span></div>
<div class="a" style="left:368px;top:772px;width:258px;height:51px;background:#fff;border:1px solid #a0a0a0"></div>
<div class="a" style="left:369px;top:776px;width:255px;height:21px;background:#4b8dc0"></div>
<div class="t" style="left:385.4px;top:791px;color:#fff;font-size:11px;"><span class="bl">Show <u>i</u>n Explorer</span></div>
<div class="t" style="left:548.5px;top:791px;color:#fff;font-size:11px;"><span class="bl">Ctrl+Shift+S</span></div>
<div class="t" style="left:385.4px;top:812px;color:#000;font-size:11px;"><span class="bl"><u>D</u>epot Tree</span></div>
</body></html>
